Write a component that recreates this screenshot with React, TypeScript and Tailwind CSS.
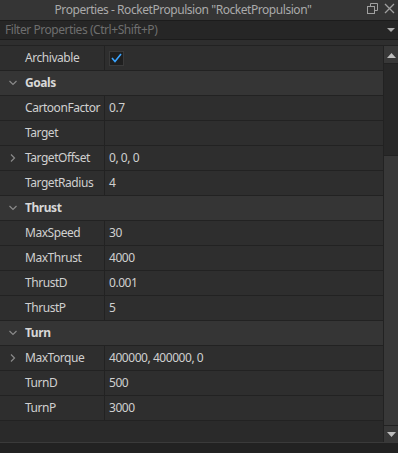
import React from "react";

type Row =
  | { kind: "group"; label: string }
  | { kind: "prop"; label: string; value?: string; expand?: boolean; check?: boolean };

const rows: Row[] = [
  { kind: "prop", label: "Archivable", check: true },
  { kind: "group", label: "Goals" },
  { kind: "prop", label: "CartoonFactor", value: "0.7" },
  { kind: "prop", label: "Target", value: "" },
  { kind: "prop", label: "TargetOffset", value: "0, 0, 0", expand: true },
  { kind: "prop", label: "TargetRadius", value: "4" },
  { kind: "group", label: "Thrust" },
  { kind: "prop", label: "MaxSpeed", value: "30" },
  { kind: "prop", label: "MaxThrust", value: "4000" },
  { kind: "prop", label: "ThrustD", value: "0.001" },
  { kind: "prop", label: "ThrustP", value: "5" },
  { kind: "group", label: "Turn" },
  { kind: "prop", label: "MaxTorque", value: "400000, 400000, 0", expand: true },
  { kind: "prop", label: "TurnD", value: "500" },
  { kind: "prop", label: "TurnP", value: "3000" },
];

const Chevron = ({ down }: { down?: boolean }) => (
  <svg width="10" height="10" viewBox="0 0 10 10" className="shrink-0">
    {down ? (
      <path d="M1.5 3 L5 6.5 L8.5 3" stroke="#8a8a8a" strokeWidth="1.2" fill="none" />
    ) : (
      <path d="M3 1.5 L6.5 5 L3 8.5" stroke="#8a8a8a" strokeWidth="1.2" fill="none" />
    )}
  </svg>
);

export default function App() {
  return (
    <div
      className="w-[398px] h-[453px] flex flex-col bg-[#2e2e2e] overflow-hidden text-[12px] tracking-[-0.45px] text-[#d0d0d0]"
      style={{ fontFamily: '"Noto Sans", "Open Sans", sans-serif' }}
    >
      {/* title bar */}
      <div className="h-[20px] flex items-center bg-[#353535] relative">
        <div className="flex-1 text-center text-[#aaaaaa] pr-[32px] leading-none whitespace-nowrap text-[12px] tracking-[-0.45px]">
          Properties - RocketPropulsion "RocketPropulsion"
        </div>
        <div className="absolute right-[3px] top-[3px] flex items-center gap-[6px]">
          <svg width="11" height="11" viewBox="0 0 11 11">
            <rect x="0.5" y="3.5" width="7" height="7" stroke="#a0a0a0" fill="none" />
            <path d="M3.5 3.5 V0.5 H10.5 V7.5 H7.5" stroke="#a0a0a0" fill="none" />
          </svg>
          <svg width="11" height="11" viewBox="0 0 11 11">
            <path d="M1 1 L10 10 M10 1 L1 10" stroke="#a0a0a0" strokeWidth="1.3" />
          </svg>
        </div>
      </div>
      {/* filter */}
      <div className="h-[20px] flex items-center bg-[#262626] border-y border-[#1c1c1c] pl-[5px] pr-[3px]">
        <div className="flex-1 text-[#6e6e6e] leading-none">Filter Properties (Ctrl+Shift+P)</div>
        <svg width="8" height="5" viewBox="0 0 8 5">
          <path d="M0 0 H8 L4 4 Z" fill="#aaaaaa" />
        </svg>
      </div>
      <div className="h-[5px] bg-[#2e2e2e]" />
      {/* main */}
      <div className="flex-1 flex border-t border-[#222222] min-h-0">
        <div className="flex-1 flex flex-col bg-[#2a2a2a]">
          {rows.map((r, i) =>
            r.kind === "group" ? (
              <div
                key={i}
                className="h-[25px] flex items-center bg-[#353535] border-b border-[#222222] shrink-0"
              >
                <div className="w-[25px] flex justify-center pl-[1px]">
                  <Chevron down />
                </div>
                <span className="font-bold text-[#d8d8d8]">{r.label}</span>
              </div>
            ) : (
              <div
                key={i}
                className="h-[25px] flex items-center bg-[#2e2e2e] border-b border-[#222222] shrink-0"
              >
                <div className="w-[105px] h-full flex items-center border-r border-[#222222] shrink-0">
                  <div className="w-[25px] flex justify-center pl-[1px]">
                    {r.expand ? <Chevron /> : null}
                  </div>
                  <span>{r.label}</span>
                </div>
                <div className="pl-[4px] flex items-center">
                  {r.check ? (
                    <div className="w-[15px] h-[15px] bg-[#1f1f1f] border border-[#3a3a3a] flex items-center justify-center">
                      <svg width="11" height="10" viewBox="0 0 11 10">
                        <path d="M1 5 L4 8.5 L10 1" stroke="#3aa4ff" strokeWidth="1.6" fill="none" />
                      </svg>
                    </div>
                  ) : (
                    <span>{r.value}</span>
                  )}
                </div>
              </div>
            )
          )}
          <div className="flex-1" />
        </div>
        {/* scrollbar */}
        <div className="w-[15px] flex flex-col border-l border-[#222222] bg-[#383838]">
          <div className="h-[17px] flex items-center justify-center bg-[#383838] border-b border-[#222222] mt-[1px]">
            <svg width="9" height="5" viewBox="0 0 9 5">
              <path d="M0 5 H9 L4.5 0 Z" fill="#bdbdbd" />
            </svg>
          </div>
          <div className="h-[92px] bg-[#282828] border-b border-[#222222]" />
          <div className="flex-1" />
          <div className="h-[17px] flex items-center justify-center border-t border-[#222222]">
            <svg width="9" height="5" viewBox="0 0 9 5">
              <path d="M0 0 H9 L4.5 5 Z" fill="#bdbdbd" />
            </svg>
          </div>
        </div>
      </div>
      <div className="h-[11px] bg-[#222222] border-t border-[#3a3a3a]" />
    </div>
  );
}
